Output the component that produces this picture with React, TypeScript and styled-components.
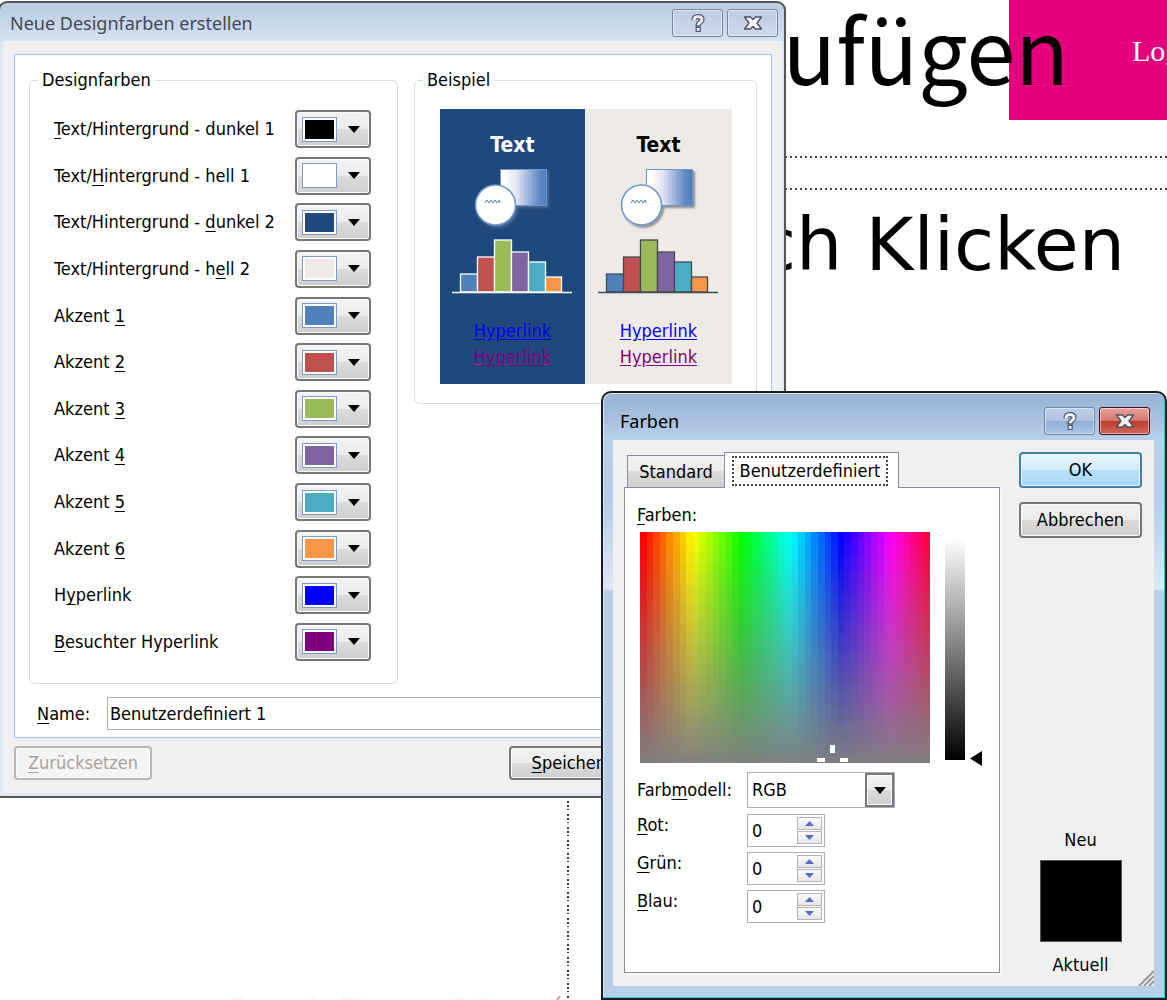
import React, { useState } from 'react';
import styled, { createGlobalStyle } from 'styled-components';

const uiFont = '"DejaVu Sans Condensed", "Noto Sans", sans-serif';

const GlobalStyle = createGlobalStyle`
  *, *::before, *::after { box-sizing: border-box; }
  body {
    margin: 0;
    background: #fff;
    color: #000;
    font: 18px/22px ${uiFont};
  }
  button, input, select { font: inherit; color: inherit; margin: 0; }
`;

/* ---------- slide behind the dialogs ---------- */

const Desktop = styled.main`
  position: relative;
  min-height: 100vh;
  overflow: hidden;
`;

const LogoBox = styled.div`
  position: absolute;
  top: 0;
  left: 1009px;
  width: 240px;
  height: 120px;
  padding: 34px 0 0 123px;
  background: #e5007d;
  color: #fff;
  font: 30px/34px "Liberation Serif", serif;
`;

const SlideTitle = styled.h1`
  position: absolute;
  top: -13px;
  right: 98px;
  margin: 0;
  white-space: nowrap;
  font: 400 88px/120px "Noto Sans CJK JP", "Open Sans", sans-serif;
`;

const SlideText = styled.p`
  position: absolute;
  top: 202px;
  right: 42px;
  margin: 0;
  white-space: nowrap;
  font: 73px/86px "DejaVu Sans", sans-serif;
`;

const GuideRow = styled.div<{ $top: number }>`
  position: absolute;
  top: ${(p) => p.$top}px;
  left: 0;
  right: 0;
  height: 2px;
  background: repeating-linear-gradient(90deg, #444 0 2px, transparent 2px 5px);
`;

const GuideColumn = styled.div`
  position: absolute;
  top: 801px;
  bottom: 2px;
  left: 567px;
  width: 2px;
  background: repeating-linear-gradient(
    180deg,
    #333 0 2px, transparent 2px 4px, #333 4px 6px, transparent 6px 8px, #333 8px 9px, transparent 9px 13px
  );
`;

const FooterMarks = styled.svg`
  position: absolute;
  bottom: 0;
  left: 230px;
`;

/* ---------- window parts ---------- */

const Window = styled.section`
  position: absolute;
  border: 2px solid #555;
`;

const ThemeWindow = styled(Window)`
  top: 1px;
  left: -2px;
  width: 788px;
  padding: 0 2px 3px 3px;
  border-radius: 9px 9px 0 0;
  background: linear-gradient(#b9cbde, #d6e4f3 40px, #dfe6f1 41px);
`;

const ColorWindow = styled(Window)`
  top: 391px;
  left: 601px;
  width: 566px;
  padding: 0 11px 12px 10px;
  border-color: #1c1c20;
  border-radius: 10px 10px 0 0;
  background: linear-gradient(#98b3d1, #a8bfe0 26px, #b7d0eb 46px, #b7cdec 110px, #dce8f5 196px, #b9cfe8 198px);
  box-shadow: inset -1px -1px 0 #35c4da, inset 1px 1px 0 #d8e6f5;
`;

const TitleBar = styled.header<{ $tall?: boolean }>`
  display: flex;
  align-items: center;
  gap: 4px;
  height: ${(p) => (p.$tall ? 47 : 38)}px;
  padding: ${(p) => (p.$tall ? '8px 4px 0 7px' : '2px 4px 0 7px')};
`;

const Title = styled.h2<{ $dim?: boolean }>`
  flex: 1;
  margin: 0;
  font: 400 18px/22px "Noto Sans", sans-serif;
  color: ${(p) => (p.$dim ? '#45475a' : '#000')};
`;

const CaptionButton = styled.button<{ $kind: 'dim' | 'blue' | 'red' }>`
  display: grid;
  place-items: center;
  width: 51px;
  height: 28px;
  padding: 0;
  border: 1px solid ${(p) => (p.$kind === 'red' ? '#501020' : '#7585a5')};
  border-radius: 3px;
  box-shadow: inset 0 0 0 1px rgba(255, 255, 255, 0.45);
  background: ${(p) =>
    p.$kind === 'dim'
      ? 'linear-gradient(#bfcde1, #ccd8eb)'
      : p.$kind === 'blue'
        ? 'linear-gradient(#bccfea, #adc3e2 48%, #93acd4 50%, #a9c6e8)'
        : 'linear-gradient(#e6a29c, #d4776c 48%, #b93e2a 50%, #d0695c)'};
`;

const ThemeBody = styled.div`
  padding: 13px 10px 13px 11px;
  background: #f0f0f0;
`;

const Panel = styled.div`
  padding: 14px;
  padding-bottom: 7px;
  border: 1px solid #99c5ff;
  background: #fff;
`;

const Groups = styled.div`
  display: flex;
  align-items: flex-start;
  gap: 16px;
`;

const Group = styled.fieldset<{ $grow: number }>`
  flex: ${(p) => p.$grow} 1 0;
  min-width: 0;
  margin: 0;
  padding: 0;
  border: 1px solid #d5dfe9;
  border-radius: 5px;
`;

const Legend = styled.legend`
  margin-left: 8px;
  padding: 0 4px;
`;

const SlotList = styled.div`
  display: flex;
  flex-direction: column;
  justify-content: space-between;
  height: 592px;
  padding: 19px 26px 22px 24px;
`;

const Slot = styled.div`
  display: flex;
  align-items: center;
  justify-content: space-between;
`;

const Key = styled.span`
  text-decoration: underline;
  text-decoration-thickness: 1px;
  text-underline-offset: 3px;
`;

const face = 'linear-gradient(#f3f3f3, #ebebeb 49%, #dcdcdc 50%, #cecece)';

const SwatchButton = styled.button`
  display: flex;
  align-items: center;
  justify-content: space-between;
  width: 76px;
  height: 38px;
  padding: 0 9px 0 5px;
  border: 2px solid #777;
  border-radius: 4px;
  background: ${face};
  box-shadow: inset 0 0 0 1px #fafafa;
`;

const Swatch = styled.span<{ $color: string }>`
  width: 35px;
  height: 25px;
  border: 1px solid #7b9cc4;
  background: ${(p) => p.$color};
  box-shadow: inset 0 0 0 2px #fff;
`;

const Preview = styled.div`
  display: grid;
  grid-template-columns: 145px 1fr;
  margin: 18px 24px 19px 25px;
`;

const PreviewHalf = styled.div<{ $dark?: boolean }>`
  display: flex;
  flex-direction: column;
  align-items: center;
  height: 275px;
  padding-top: 24px;
  background: ${(p) => (p.$dark ? '#1f497d' : '#eeebe6')};
  color: ${(p) => (p.$dark ? '#fff' : '#000')};
`;

const SampleText = styled.strong`
  font-size: 21px;
  line-height: 24px;
`;

const SampleArt = styled.svg`
  margin: 8px 0 19px;
`;

const SampleLink = styled.a<{ $visited?: boolean }>`
  line-height: 26px;
  color: ${(p) => (p.$visited ? '#800080' : '#0000ff')};
  text-underline-offset: 2px;
`;

const NameRow = styled.div`
  display: flex;
  align-items: center;
  margin-top: 13px;
  padding-left: 8px;
`;

const NameLabel = styled.label`
  width: 70px;
`;

const NameInput = styled.input`
  flex: 1;
  min-width: 0;
  height: 33px;
  padding: 0 2px;
  border: 1px solid #abadb3;
  background: #fff;
`;

const Footer = styled.div`
  display: flex;
  gap: 11px;
  padding-top: 8px;
`;

const PushButton = styled.button<{ $primary?: boolean }>`
  min-width: ${(p) => (p.$primary === undefined ? 126 : 123)}px;
  height: ${(p) => (p.$primary === undefined ? 34 : 36)}px;
  padding: 0 12px;
  border: ${(p) => (p.$primary ? '2px solid #3c7fb1' : '2px solid #777')};
  border-radius: 4px;
  background: ${(p) =>
    p.$primary ? 'linear-gradient(#e6f4fd, #d5ecfb 49%, #b8e1fa 50%, #a5d7f7)' : face};
  box-shadow: inset 0 0 0 1px #fafafa;

  &:disabled {
    border-color: #b3b8bc;
    background: #f4f4f4;
    color: #aaa19a;
  }
  &:first-child:disabled {
    margin-right: auto;
    min-width: 137px;
  }
`;

/* ---------- colour dialog ---------- */

const ColorBody = styled.div`
  position: relative;
  display: grid;
  grid-template-columns: 1fr 123px;
  gap: 19px;
  padding: 12px 12px 10px 11px;
  background: #f0f0f0;
`;

const TabColumn = styled.div`
  padding-bottom: 3px;
`;

const TabStrip = styled.div`
  display: flex;
  align-items: flex-end;
  height: 36px;
  padding-left: 3px;
`;

const Tab = styled.button<{ $active?: boolean }>`
  position: relative;
  height: ${(p) => (p.$active ? 36 : 33)}px;
  width: ${(p) => (p.$active ? 175 : 98)}px;
  margin-right: ${(p) => (p.$active ? 0 : -1)}px;
  padding: 0;
  border: 1px solid #8b8b9b;
  border-bottom: ${(p) => (p.$active ? '0' : '1px solid #8b8b9b')};
  background: ${(p) => (p.$active ? '#fff' : face)};
  z-index: ${(p) => (p.$active ? 1 : 0)};
`;

const FocusRing = styled.span`
  display: block;
  margin: 0 10px 0 7px;
  padding: 2px 0;
  border: 2px dotted #444;
`;

const TabPanel = styled.div`
  min-height: 486px;
  margin-top: -1px;
  padding: 16px 12px;
  border: 1px solid #8b8b9b;
  background: #fff;
  box-shadow: 2px 2px 0 #fafafa;
`;

const Pickers = styled.div`
  display: flex;
  gap: 15px;
  padding: 6px 3px 9px;
`;

const LightColumn = styled.div`
  display: flex;
  align-items: flex-end;
  gap: 5px;
`;

const LightBar = styled.div`
  width: 20px;
  height: 222px;
  margin-bottom: 3px;
  background: linear-gradient(#fff, #000);
`;

const LightMarker = styled.svg`
  margin-bottom: -3px;
`;

const FieldRow = styled.div<{ $top?: boolean }>`
  display: flex;
  align-items: ${(p) => (p.$top ? 'flex-start' : 'center')};
  margin-bottom: ${(p) => (p.$top ? 5 : 6)}px;
`;

const FieldLabel = styled.label`
  width: 110px;
`;

const SelectBox = styled.div`
  position: relative;
  width: 148px;
  height: 36px;
`;

const Select = styled.select`
  width: 100%;
  height: 100%;
  padding: 0 4px;
  border: 1px solid #abadb8;
  border-radius: 0;
  background: #fff;
  appearance: none;
`;

const SelectArrow = styled.span`
  position: absolute;
  top: 1px;
  right: 1px;
  bottom: 1px;
  display: grid;
  place-items: center;
  width: 29px;
  border: 2px solid #777;
  background: ${face};
  box-shadow: inset 0 0 0 1px #fafafa;
  pointer-events: none;
`;

const Spinner = styled.div`
  display: flex;
  width: 78px;
  height: 33px;
  padding: 2px;
  border: 1px solid #abadb8;
  background: #fff;
`;

const SpinInput = styled.input`
  flex: 1;
  min-width: 0;
  padding: 0 2px;
  border: 0;
  background: none;
`;

const SpinButtons = styled.div`
  display: grid;
  grid-template-rows: 1fr 1fr;
  gap: 1px;
  width: 25px;
`;

const SpinButton = styled.button`
  display: grid;
  place-items: center;
  padding: 0;
  border: 1px solid #b3b1bd;
  background: linear-gradient(#fafafa, #e6e6e6);
`;

const SideColumn = styled.div`
  display: flex;
  flex-direction: column;
  align-items: center;
  gap: 14px;
`;

const Compare = styled.div`
  display: flex;
  flex-direction: column;
  align-items: center;
  gap: 9px;
  margin-top: auto;
`;

const CompareSwatch = styled.div`
  width: 82px;
  height: 82px;
  margin-bottom: 3px;
  border: 1px solid #555;
  background: #000;
`;

const Grip = styled.svg`
  position: absolute;
  right: 0;
  bottom: 0;
`;

/* ---------- glyphs ---------- */

const helpPath = 'M4 7.200C4 4.800 5.500 3.600 8 3.600s4 1.200 4 3.200c0 2.600-3.800 2.600-3.800 5.400';

const HelpGlyph = () => (
  <svg width="16" height="20" viewBox="0 0 16 20" fill="none" aria-hidden="true">
    <path d={helpPath} stroke="#50546e" strokeWidth="5.200" />
    <path d="M5.600 11.200h5.200v2.400H5.600zM5.600 13.800h5.200v5.200H5.600z" fill="#50546e" />
    <path d={helpPath} stroke="#f4f4f8" strokeWidth="2.800" />
    <path d="M6.800 15h2.800v2.800H6.800z" fill="#f4f4f8" />
  </svg>
);

const CloseGlyph = () => (
  <svg width="20" height="16" viewBox="0 0 20 16" aria-hidden="true">
    <path
      d="M1.500 2h6L10 4.600 12.500 2h6L14 8l4.500 6h-6L10 11.400 7.500 14h-6L6 8z"
      fill="#f4f4f4"
      stroke="#50506a"
      strokeWidth="1.400"
      strokeLinejoin="round"
    />
  </svg>
);

const DownArrow = () => (
  <svg width="12" height="7" viewBox="0 0 12 7" aria-hidden="true">
    <path d="M0 0h12L6 7z" fill="#000" />
  </svg>
);

const SpinArrow = ({ up }: { up?: boolean }) => (
  <svg width="9" height="5" viewBox="0 0 9 5" aria-hidden="true">
    <path d={up ? 'M0 5h9L4.500 0z' : 'M0 0h9L4.500 5z'} fill="#5b6cc0" />
  </svg>
);

const barTops = [109, 92, 75, 87, 97, 112];
const barEdges = [20, 37, 54, 71, 88, 105, 121];
const accents = ['#4f81bd', '#c0504d', '#9bbb59', '#8064a2', '#4bacc6', '#f79646'];

const Sample = ({ dark }: { dark?: boolean }) => {
  const id = dark ? 'fade-dark' : 'fade-light';
  const line = dark ? '#fff' : '#424a58';
  return (
    <SampleArt width="145" height="134" viewBox="0 0 145 134" aria-hidden="true">
      <defs>
        <linearGradient id={id}>
          <stop offset="0.1" stopColor="#fff" />
          <stop offset="0.35" stopColor="#e4e4f4" />
          <stop offset="0.85" stopColor="#5c88c4" />
          <stop offset="1" stopColor="#4f81bd" />
        </linearGradient>
        <filter id={`${id}-shadow`} x="-20%" y="-20%" width="150%" height="150%">
          <feDropShadow dx="2" dy="2" stdDeviation="1" floodColor={dark ? '#8a93a5' : '#000'} floodOpacity="0.4" />
        </filter>
      </defs>
      <g filter={`url(#${id}-shadow)`} stroke="#6c97cd">
        <rect x="60.500" y="4.500" width="46" height="36" fill={`url(#${id})`} />
        <circle cx="55.500" cy="40" r="20" fill="#fff" strokeWidth="1.500" />
      </g>
      <path d="M45 38l2-3 2 3 2-3 2 3 2-3 2 3 2-3 1 3" fill="none" stroke="#4f81bd" />
      {accents.map((color, i) => (
        <rect
          key={color}
          x={barEdges[i] + 0.5}
          y={barTops[i]}
          width={barEdges[i + 1] - barEdges[i]}
          height={127 - barTops[i]}
          fill={color}
          stroke={line}
          strokeWidth="1.300"
        />
      ))}
      <path d="M12 127.500h120" stroke={line} strokeWidth="1.500" />
    </SampleArt>
  );
};

const hues = Array.from({ length: 44 }, (_, i) => i * 8);
const greyRows = Array.from({ length: 35 }, (_, i) => i / 35);

const Spectrum = () => (
  <svg width="290" height="231" viewBox="0 0 44 35" preserveAspectRatio="none" shapeRendering="crispEdges" role="img" aria-label="Farben">
    {hues.map((h, i) => (
      <rect key={h} x={i} width="1" height="35" fill={`hsl(${h} 100% 50%)`} />
    ))}
    {greyRows.map((a, i) => (
      <rect key={a} y={i} width="44" height="1" fill="#808080" fillOpacity={a} />
    ))}
    <path d="M28.800 32.300h.8v1.200h-.8zM26.800 34.300h1.300v.5h-1.300zM30.300 34.300h1.300v.5h-1.300z" fill="#fff" />
  </svg>
);

/* ---------- data ---------- */

type SlotData = { before: string; hot: string; after: string; color: string };

const slots: SlotData[] = [
  { before: '', hot: 'T', after: 'ext/Hintergrund - dunkel 1', color: '#000000' },
  { before: 'Text/', hot: 'H', after: 'intergrund - hell 1', color: '#ffffff' },
  { before: 'Text/Hintergrund - ', hot: 'd', after: 'unkel 2', color: '#1f497d' },
  { before: 'Text/Hintergrund - h', hot: 'e', after: 'll 2', color: '#eeebe6' },
  ...accents.map((color, i) => ({ before: 'Akzent ', hot: String(i + 1), after: '', color })),
  { before: 'H', hot: 'y', after: 'perlink', color: '#0000ff' },
  { before: '', hot: 'B', after: 'esuchter Hyperlink', color: '#800080' },
];

const channels = [
  { id: 'rot', hot: 'R', rest: 'ot:' },
  { id: 'gruen', hot: 'G', rest: 'rün:' },
  { id: 'blau', hot: 'B', rest: 'lau:' },
];

const ChannelField = ({ id, hot, rest }: { id: string; hot: string; rest: string }) => {
  const [value, setValue] = useState(0);
  const step = (d: number) => setValue((v) => Math.min(255, Math.max(0, v + d)));
  return (
    <FieldRow $top>
      <FieldLabel htmlFor={id}>
        <Key>{hot}</Key>
        {rest}
      </FieldLabel>
      <Spinner>
        <SpinInput id={id} inputMode="numeric" value={value} onChange={(e) => setValue(Number(e.target.value) || 0)} />
        <SpinButtons>
          <SpinButton type="button" aria-label="Erhöhen" onClick={() => step(1)}>
            <SpinArrow up />
          </SpinButton>
          <SpinButton type="button" aria-label="Verringern" onClick={() => step(-1)}>
            <SpinArrow />
          </SpinButton>
        </SpinButtons>
      </Spinner>
    </FieldRow>
  );
};

const PreviewSide = ({ dark }: { dark?: boolean }) => (
  <PreviewHalf $dark={dark}>
    <SampleText>Text</SampleText>
    <Sample dark={dark} />
    <SampleLink href="#link">Hyperlink</SampleLink>
    <SampleLink href="#visited" $visited>
      Hyperlink
    </SampleLink>
  </PreviewHalf>
);

const ThemeDialog = () => (
  <ThemeWindow role="dialog" aria-labelledby="theme-title">
    <TitleBar>
      <Title id="theme-title" $dim>
        Neue Designfarben erstellen
      </Title>
      <CaptionButton type="button" $kind="dim" aria-label="Hilfe">
        <HelpGlyph />
      </CaptionButton>
      <CaptionButton type="button" $kind="dim" aria-label="Schließen">
        <CloseGlyph />
      </CaptionButton>
    </TitleBar>
    <ThemeBody>
      <Panel>
        <Groups>
          <Group $grow={369}>
            <Legend>Designfarben</Legend>
            <SlotList>
              {slots.map((s, i) => (
                <Slot key={i}>
                  <label htmlFor={`slot-${i}`}>
                    {s.before}
                    <Key>{s.hot}</Key>
                    {s.after}
                  </label>
                  <SwatchButton type="button" id={`slot-${i}`}>
                    <Swatch $color={s.color} />
                    <DownArrow />
                  </SwatchButton>
                </Slot>
              ))}
            </SlotList>
          </Group>
          <Group $grow={343}>
            <Legend>Beispiel</Legend>
            <Preview>
              <PreviewSide dark />
              <PreviewSide />
            </Preview>
          </Group>
        </Groups>
        <NameRow>
          <NameLabel htmlFor="name">
            <Key>N</Key>ame:
          </NameLabel>
          <NameInput id="name" defaultValue="Benutzerdefiniert 1" />
        </NameRow>
      </Panel>
      <Footer>
        <PushButton type="button" disabled>
          <Key>Z</Key>urücksetzen
        </PushButton>
        <PushButton type="button">
          <Key>S</Key>peichern
        </PushButton>
        <PushButton type="button">Abbrechen</PushButton>
      </Footer>
    </ThemeBody>
  </ThemeWindow>
);

const ColorDialog = () => (
  <ColorWindow role="dialog" aria-labelledby="color-title">
    <TitleBar $tall>
      <Title id="color-title">Farben</Title>
      <CaptionButton type="button" $kind="blue" aria-label="Hilfe">
        <HelpGlyph />
      </CaptionButton>
      <CaptionButton type="button" $kind="red" aria-label="Schließen">
        <CloseGlyph />
      </CaptionButton>
    </TitleBar>
    <ColorBody>
      <TabColumn>
        <TabStrip role="tablist">
          <Tab type="button" role="tab" aria-selected="false">
            Standard
          </Tab>
          <Tab type="button" role="tab" aria-selected="true" $active>
            <FocusRing>Benutzerdefiniert</FocusRing>
          </Tab>
        </TabStrip>
        <TabPanel role="tabpanel">
          <div>
            <Key>F</Key>arben:
          </div>
          <Pickers>
            <Spectrum />
            <LightColumn>
              <LightBar />
              <LightMarker width="12" height="15" viewBox="0 0 12 15" aria-hidden="true">
                <path d="M12 0v15L0 7.500z" fill="#000" />
              </LightMarker>
            </LightColumn>
          </Pickers>
          <FieldRow>
            <FieldLabel htmlFor="model">
              Farb<Key>m</Key>odell:
            </FieldLabel>
            <SelectBox>
              <Select id="model" defaultValue="RGB">
                <option>RGB</option>
                <option>HSL</option>
              </Select>
              <SelectArrow>
                <DownArrow />
              </SelectArrow>
            </SelectBox>
          </FieldRow>
          {channels.map((c) => (
            <ChannelField key={c.id} {...c} />
          ))}
        </TabPanel>
      </TabColumn>
      <SideColumn>
        <PushButton type="button" $primary>
          OK
        </PushButton>
        <PushButton type="button" $primary={false}>
          Abbrechen
        </PushButton>
        <Compare>
          <span>Neu</span>
          <CompareSwatch />
          <span>Aktuell</span>
        </Compare>
      </SideColumn>
      <Grip width="16" height="16" viewBox="0 0 16 16" aria-hidden="true">
        <path d="M1 16L16 1M6 16L16 6M11 16l5-5" stroke="#9a9a9a" strokeWidth="2" />
      </Grip>
    </ColorBody>
  </ColorWindow>
);

export default function App() {
  return (
    <>
      <GlobalStyle />
      <Desktop>
        <LogoBox>Logo</LogoBox>
        <SlideTitle>hinzufügen</SlideTitle>
        <GuideRow $top={156} />
        <GuideRow $top={188} />
        <SlideText>durch Klicken</SlideText>
        <GuideColumn />
        <FooterMarks width="340" height="4" viewBox="0 0 340 4" aria-hidden="true">
          <path d="M2 3h12M80 3h6M110 3h18M224 3h10M248 3h8" stroke="#fde4f1" strokeWidth="1" />
          <path d="M327 4l3-4" stroke="#ee8ab8" strokeWidth="2" />
        </FooterMarks>
        <ThemeDialog />
        <ColorDialog />
      </Desktop>
    </>
  );
}
